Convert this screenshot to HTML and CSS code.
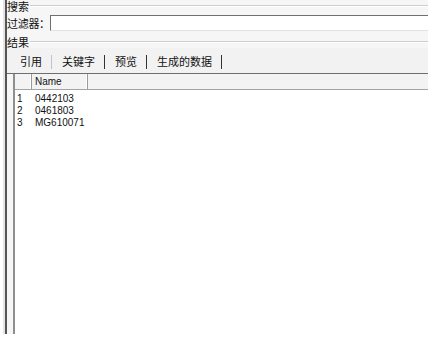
FILE: index.html
```html
<!DOCTYPE html>
<html lang="zh-CN">
<head>
	<meta charset="UTF-8">
	<title>搜索</title>
	<link rel="stylesheet" href="styles.css">
</head>
<body>
	<div class="win">
		<div class="group-title"><span>搜索</span></div>
		<div class="filter">
			<label for="filter">过滤器：</label>
			<input id="filter" class="filter-input" type="text">
		</div>
		<div class="group-title results"><span>结果</span></div>
		<ul class="tabs">
			<li class="active">引用</li>
			<li>关键字</li>
			<li>预览</li>
			<li>生成的数据</li>
		</ul>
		<div class="list">
			<div class="list-head">
				<span class="col-idx"></span>
				<span class="col-name">Name</span>
				<span class="col-rest"></span>
			</div>
			<div class="list-body">
				<div class="row"><span class="col-idx">1</span><span class="col-name">0442103</span></div>
				<div class="row"><span class="col-idx">2</span><span class="col-name">0461803</span></div>
				<div class="row"><span class="col-idx">3</span><span class="col-name">MG610071</span></div>
			</div>
		</div>
	</div>
</body>
</html>
```

FILE: styles.css
```css
ul,
li {
	margin: 0;
	padding: 0;
}
li {
	list-style: none;
}
body {
	margin: 0;
	background: #fff;
	font-family: "Noto Sans CJK SC", "Liberation Sans", sans-serif;
	font-size: 11px;
	color: #111;
	white-space: nowrap;
}
.win {
	display: flex;
	flex-direction: column;
	box-sizing: border-box;
	width: 423px;
	height: 334px;
	margin-left: 5px;
	border-left: 2px solid #555;
	box-shadow: -2px 0 0 #e4e4e4;
	background: #f6f6f6;
}

/* 分组标题 */
.group-title {
	display: flex;
	align-items: center;
	height: 12px;
	line-height: 12px;
}
.group-title span {
	flex: none;
	padding-right: 1px;
}
.group-title::after {
	content: "";
	flex: 1;
	border-top: 1px solid #cdcdcd;
	border-bottom: 1px solid #fff;
}
.group-title.results {
	margin-top: 5px;
}

/* 过滤器 */
.filter {
	display: flex;
	align-items: center;
	height: 16px;
	margin-top: 3px;
}
.filter label {
	flex: none;
	width: 43px;
	line-height: 16px;
	letter-spacing: -0.3px;
}
.filter-input {
	flex: 1;
	min-width: 0;
	box-sizing: border-box;
	height: 16px;
	margin: 0;
	padding: 0;
	border: none;
	border-top: 1px solid #707070;
	border-left: 1px solid #707070;
	border-bottom: 1px solid #e2e2e2;
	background: #fff;
}

/* 标签页 */
.tabs {
	display: flex;
	align-items: flex-start;
	height: 25px;
	padding-left: 3px;
	border-bottom: 1px solid #6e6e6e;
	background: #f2f2f2;
}
.tabs li {
	height: 14px;
	margin-top: 7px;
	padding: 0 9px 0 10px;
	line-height: 13px;
	border-right: 1px solid #333;
}
.tabs li.active {
	border-right-color: #c4c4c4;
}

/* 列表 */
.list {
	display: flex;
	flex-direction: column;
	flex: 1;
	margin-left: 6px;
	border-left: 2px solid #8f8f8f;
	background: #fff;
	font-family: "Liberation Sans", sans-serif;
	font-size: 10px;
}
.list-head {
	display: flex;
	height: 15px;
	line-height: 15px;
	border-bottom: 1px solid #a4a4a4;
	background: #f3f3f3;
}
.list-head span {
	box-sizing: border-box;
	border-right: 1px solid #9a9a9a;
	box-shadow: inset -1px 0 0 #fff;
}
.list-head .col-rest {
	flex: 1;
	border-right: none;
	box-shadow: none;
}
.col-idx {
	box-sizing: border-box;
	width: 17px;
	padding-left: 2px;
}
.col-name {
	box-sizing: border-box;
	width: 56px;
	padding-left: 3px;
}
.list-body {
	padding-top: 3px;
}
.row {
	display: flex;
	height: 12px;
	line-height: 12px;
}
```
